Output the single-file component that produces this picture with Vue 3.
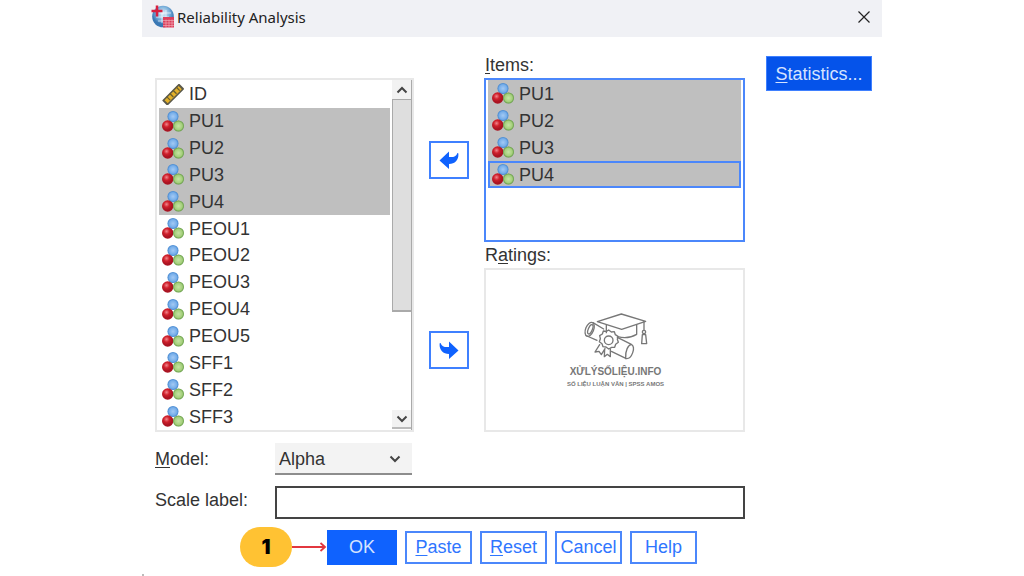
<script setup>
import { ref } from 'vue'

const variables = ['ID', 'PU1', 'PU2', 'PU3', 'PU4', 'PEOU1', 'PEOU2', 'PEOU3', 'PEOU4', 'PEOU5', 'SFF1', 'SFF2', 'SFF3']
const items = ['PU1', 'PU2', 'PU3', 'PU4']
const focused = 'PU4'
const model = ref('Alpha')
const scaleLabel = ref('')
</script>

<template>
  <svg class="defs" width="0" height="0" aria-hidden="true">
    <defs>
      <radialGradient id="blue"><stop offset="0" stop-color="#a3c9f4" /><stop offset=".7" stop-color="#76aeea" /><stop offset="1" stop-color="#4285ce" /></radialGradient>
      <radialGradient id="red" cx=".4" cy=".35"><stop offset="0" stop-color="#f0868c" /><stop offset=".5" stop-color="#d0202c" /><stop offset="1" stop-color="#a91422" /></radialGradient>
      <radialGradient id="green"><stop offset="0" stop-color="#c6e3a4" /><stop offset=".7" stop-color="#a4cf7b" /><stop offset="1" stop-color="#5f9840" /></radialGradient>
      <radialGradient id="globe" cx=".5" cy=".35"><stop offset="0" stop-color="#e4f1fa" /><stop offset=".6" stop-color="#7db2dc" /><stop offset="1" stop-color="#3a78b4" /></radialGradient>
      <symbol id="nominal" viewBox="0 0 22 21">
        <circle cx="11" cy="5.500" r="5.500" fill="url(#blue)" />
        <circle cx="5.700" cy="15" r="5.700" fill="url(#red)" />
        <circle cx="16.500" cy="15" r="5.500" fill="url(#green)" />
      </symbol>
      <symbol id="scale" viewBox="0 0 22 21">
        <g transform="rotate(-45 11 10.500)">
          <rect x="-1" y="7" width="24" height="7.500" rx=".8" fill="#5b5949" />
          <rect x="1" y="8.500" width="20" height="4.500" fill="#e3b02a" />
          <path d="M5 7.500v5M9.500 7.500v5M14 7.500v5M18.500 7.500v5" stroke="#6b5f2e" stroke-width="1.300" />
        </g>
      </symbol>
    </defs>
  </svg>

  <main class="dialog">
    <header class="titlebar">
      <svg class="app-icon" viewBox="0 0 24 24" aria-hidden="true">
        <circle cx="12" cy="11.500" r="10.800" fill="url(#globe)" />
        <path d="M8 8h12M5 12h13M7 16h6M11 5v13M15 5v8" stroke="#f2f8fd" stroke-width="1" opacity=".7" fill="none" />
        <path d="M6 .5v11M.5 6h11" stroke="#d81f3f" stroke-width="2.500" />
        <rect x="12" y="12" width="11" height="10.500" fill="#dc3f5c" />
        <path d="M12 15.500h11M12 18h11M12 20.500h11M15 14.500v8M18 14.500v8M21 14.500v8" stroke="#f4b6c0" stroke-width=".6" />
      </svg>
      <h1>Reliability Analysis</h1>
      <button class="close" aria-label="Close">
        <svg viewBox="0 0 12 12" width="12" height="12"><path d="M.5.5l11 11M11.500.5l-11 11" stroke="#222" stroke-width="1.200" /></svg>
      </button>
    </header>

    <section class="fields">
      <div class="source">
        <ul class="list" role="listbox" aria-label="Variables" aria-multiselectable="true">
          <li v-for="v in variables" :key="v" role="option" :aria-selected="items.includes(v)" :class="{ selected: items.includes(v) }">
            <svg class="type"><use :href="v === 'ID' ? '#scale' : '#nominal'" /></svg>{{ v }}
          </li>
        </ul>
        <div class="scrollbar">
          <button class="step" aria-label="Scroll up"><svg viewBox="0 0 12 8" width="12" height="8"><path d="M1.500 6.500L6 2l4.500 4.500" /></svg></button>
          <div class="thumb"></div>
          <button class="step down" aria-label="Scroll down"><svg viewBox="0 0 12 8" width="12" height="8"><path d="M1.500 1.500L6 6l4.500-4.500" /></svg></button>
        </div>
      </div>

      <div class="movers">
        <button class="move" aria-label="Remove from items">
          <svg viewBox="0 0 20 20" width="20" height="20"><path d="M.5 10.500L10 1.500V7c4.500.5 7-.5 8.500-4 .5 0 .9.300.9 1 .3 6-3.500 10-9.400 10v5z" fill="#0f62fe" /></svg>
        </button>
        <button class="move" aria-label="Add to ratings">
          <svg viewBox="0 0 20 20" width="20" height="20"><path d="M19.500 10.500L10 1.500V7c-4.500.5-7-.5-8.500-4-.5 0-.9.300-.9 1-.3 6 3.500 10 9.400 10v5z" fill="#0f62fe" /></svg>
        </button>
      </div>

      <div class="targets">
        <span id="items-label" class="caption"><u>I</u>tems:</span>
        <ul class="box items" role="listbox" aria-labelledby="items-label" aria-multiselectable="true">
          <li v-for="v in items" :key="v" role="option" aria-selected="true" class="selected" :class="{ focused: v === focused }">
            <svg class="type"><use href="#nominal" /></svg>{{ v }}
          </li>
        </ul>
        <span id="ratings-label" class="caption">R<u>a</u>tings:</span>
        <div class="box ratings" role="group" aria-labelledby="ratings-label">
          <svg class="cap" viewBox="69 36 198 144" fill="none" stroke="#777" stroke-width="4" stroke-linejoin="round" stroke-linecap="round" aria-hidden="true">
            <path d="M112 65L184 42l73 22-72 24z" />
            <path d="M139 76v22M230 74v29c-17 10-37 12-57 7" />
            <path d="M252 66v25" />
            <circle cx="252" cy="96" r="5" />
            <path d="M247 104h10l3 27h-15z" />
            <ellipse cx="89" cy="88" rx="12" ry="22" transform="rotate(22 89 88)" />
            <ellipse cx="91" cy="88" rx="6" ry="15" transform="rotate(22 91 88)" />
            <path d="M99 68l32 19M81 108l30 13M172 112l42 21c14 8 2 44-15 43l-45-22M214 133c-9 2-19 18-17 43" />
            <path d="M146 90l8 6 9-1 3 9 8 5-2 9 3 9-8 6-3 9-9 0-9 5-8-6-9-1-3-9-8-6 3-9-2-9 8-5 3-9 9 1z" />
            <circle cx="146" cy="121" r="13" />
            <path d="M119 134l-14 22 12-2 7 10 11-18M134 148l-1 22 9-7 9 7v-23" />
          </svg>
          <strong>XỬLÝSỐLIỆU.INFO</strong>
          <small>SỐ LIỆU LUẬN VĂN | SPSS AMOS</small>
        </div>
      </div>

      <div class="side">
        <button class="btn primary statistics"><span><u>S</u>tatistics...</span></button>
      </div>
    </section>

    <section class="options">
      <label for="model"><u>M</u>odel:</label>
      <div class="select">
        <select id="model" v-model="model"><option>Alpha</option></select>
        <svg viewBox="0 0 12 8" width="12" height="8" aria-hidden="true"><path d="M1.500 1.500L6 6l4.500-4.500" /></svg>
      </div>
      <label for="scale-label">Scale label:</label>
      <input id="scale-label" v-model="scaleLabel" type="text">
    </section>

    <footer class="actions">
      <span class="badge">1</span>
      <svg class="pointer" viewBox="0 0 35 12" aria-hidden="true"><path d="M0 6h33M28.500 2l4.500 4-4.500 4" fill="none" stroke="#e2373f" stroke-width="1.800" /></svg>
      <button class="btn primary ok">OK</button>
      <button class="btn"><span><u>P</u>aste</span></button>
      <button class="btn"><span><u>R</u>eset</span></button>
      <button class="btn">Cancel</button>
      <button class="btn">Help</button>
    </footer>
  </main>
</template>

<style>
body { background: #fff; }
</style>

<style scoped>
* { box-sizing: border-box; }
.defs { position: absolute; }
.dialog {
  position: relative;
  max-width: 740px;
  min-height: 100vh;
  margin: 0 auto;
  font: 18px/26px "Liberation Sans", Arial, sans-serif;
  color: #333;
}
.dialog::after { content: ""; position: absolute; left: 0; bottom: 0; width: 2px; height: 2px; background: #bbb; }
button, input, select { font: inherit; color: inherit; margin: 0; padding: 0; border-radius: 0; }
ul { list-style: none; margin: 0; padding: 0; }
u { text-decoration-thickness: 1px; text-underline-offset: 2px; }

.titlebar { display: flex; align-items: center; height: 37px; padding: 0 12px 4px 9px; background: #f0f1f5; }
.app-icon { width: 24px; height: 24px; }
h1 { margin: 0 auto 0 2px; font: 15px/24px "Noto Sans", "Open Sans", sans-serif; color: #222; }
.close { display: flex; border: 0; background: none; }

.fields {
  display: grid;
  grid-template-columns: 259fr 40px 261fr 112px;
  column-gap: 15px;
  padding: 15px 10px 0 13px;
}
.source { display: flex; height: 354px; margin-top: 26px; border: 2px solid #e8e8e8; }
.list { flex: 1; display: flex; flex-direction: column; margin: 0 2px; padding-top: 1px; }
li { display: flex; align-items: center; gap: 5px; padding-left: 3px; }
.list li { flex: 1; }
.selected { background: #bfbfbf; }
.type { width: 22px; height: 21px; }
.scrollbar { display: flex; flex-direction: column; width: 20px; border-right: 1px solid #aaa; }
.step { display: flex; align-items: center; justify-content: center; height: 19px; border: 0; background: #f2f2f2; }
.step path, .select path { fill: none; stroke: #444; stroke-width: 2; }
.thumb { height: 213px; background: #dedede; border: 1px solid #aaa; border-width: 1px 0 2px 1px; }
.down { margin: auto 0 1px; border-bottom: 2px solid #bbb; }

.movers { display: flex; flex-direction: column; gap: 152px; padding-top: 89px; }
.move { display: flex; align-items: center; justify-content: center; height: 38px; background: #fff; border: 2px solid #3f80ff; }

.targets { display: flex; flex-direction: column; }
.caption { padding-left: 1px; }
.box { height: 164px; border: 2px solid #e8e8e8; }
.items { padding: 0 2px; border-color: #4b87fb; }
.items li { height: 27px; padding-left: 4px; }
.items .focused { outline: 2px solid #4b87fb; outline-offset: -2px; }
.ratings { display: flex; flex-direction: column; align-items: center; padding: 42px 0 0 2px; color: #777; }
.cap { width: 66px; height: 48px; margin-bottom: 5px; }
.ratings strong { font-size: 10px; line-height: 14px; }
.ratings small { font-size: 6px; line-height: 10px; font-weight: 700; }

.side { padding: 4px 0 0 6px; }
.btn { height: 33px; width: 67px; background: #fff; color: #2f76ff; border: 2px solid #4b87fb; }
.primary { height: 35px; color: #d5e3ff; background: #0f62fe; border-color: #0f62fe; }
.statistics { width: 100%; background: #0553ea; border: 1px solid #3f80ff; }

.options {
  display: grid;
  grid-template-columns: 120px 1fr;
  row-gap: 11px;
  align-items: center;
  padding: 11px 137px 0 13px;
}
.select { position: relative; width: 137px; }
select { display: block; width: 100%; height: 32px; padding: 2px 0 0 4px; appearance: none; background: #f3f3f3; border: 0; border-bottom: 2px solid #8d8d8d; }
.select svg { position: absolute; right: 11px; top: 12px; pointer-events: none; }
input { height: 33px; border: 2px solid #444; background: #fff; }
.options label:last-of-type { padding-bottom: 6px; }

.actions { display: flex; align-items: center; gap: 8px; padding: 8px 0 0 98px; }
.badge { width: 52px; height: 40px; border-radius: 20px; background: #ffc233; color: #000; text-align: center; font: 900 20px/40px Inter, sans-serif; }
.pointer { width: 35px; height: 12px; margin: 0 -8px; }
.ok { width: 70px; }
</style>
